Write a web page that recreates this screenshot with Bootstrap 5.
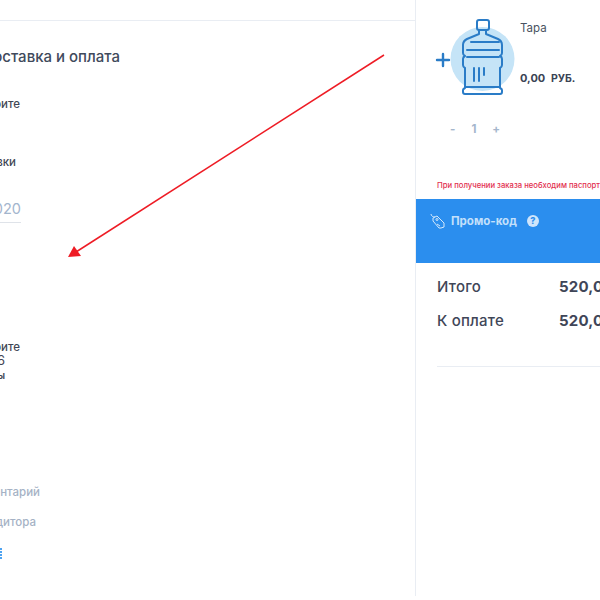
<!DOCTYPE html>
<html lang="ru">
<head>
<meta charset="utf-8">
<link href="https://cdn.jsdelivr.net/npm/bootstrap@5.3.0/dist/css/bootstrap.min.css" rel="stylesheet">
<style>
html,body{height:100%;overflow:hidden;background:#fff}
body{font-family:Inter,"Noto Sans",sans-serif;color:#3a4354}
.shell{height:596px;position:relative}
.pane-left{width:416px;border-right:1px solid #e9edf3;overflow:hidden;flex:none}
.pane-left-inner{margin-left:-100px;width:220px;padding-top:20px}
.top-rule{width:516px;border-top:1px solid #e9edf3;height:1px}
.line{text-align:right;white-space:nowrap}
.ttl{font-size:15px;font-weight:500;color:#3f4a5c;line-height:20px;margin-top:26px;width:220px}
.lbl{font-size:11.5px;font-weight:500;line-height:14px;color:#3f4655}
.l1{margin-top:30px;width:120px}
.l2{margin-top:44px;width:116px}
.date{font-size:14.500px;color:#a3b5cd;line-height:18px;margin-top:31px;width:121px}
.date-rule{border-bottom:1px solid #dfe3e9;margin-top:4px;width:121px}
.l3{margin-top:117px;width:120px}
.l3b{font-size:13px;line-height:13px;color:#3f4655;font-weight:400;width:105px}
.l3c{font-size:10px;line-height:14px;font-weight:600;color:#3f4655;width:105px;margin-top:1px}
.faded{font-size:11.5px;font-weight:500;color:#a5b2c5;line-height:14px}
.f1{margin-top:103px;width:140px}
.f2{margin-top:16px;width:136px}
.dots{width:102px;height:12px;margin-top:19px;display:flex;justify-content:flex-end}
.pane-right{flex:1;min-width:0;overflow:hidden}
.item{height:199px;padding:28px 0 0 21px;position:relative;white-space:nowrap}
.bottle{position:absolute;left:15px;top:17px}
.item-name{margin-left:83px;font-size:11.5px;line-height:1;margin-top:-5px;color:#4a5362}
.item-price{margin-left:83px;margin-top:36px;font-size:11px;font-weight:700;line-height:14px;color:#3a4354}
.item-price span{margin-left:3px;font-size:10.5px}
.stepper{margin-top:36px;margin-left:13px;font-size:11.5px;font-weight:700;color:#a5b6cc;line-height:14px;gap:16px}
.warn{color:#e2304f;font-size:7.700px;font-weight:500;line-height:10px;margin-top:45px}
.promo{height:64px;background:#2b8eee;color:#c3e0fb;padding:14px 0 0 14px;white-space:nowrap}
.promo-t{font-size:11.5px;font-weight:700;line-height:16px}
.tagi{flex:none;margin-right:6px}
.q{width:12px;height:12px;border-radius:50%;background:#cfe5fb;color:#2b8eee;font-size:9px;font-weight:800;line-height:12px;text-align:center;margin:2px 0 0 10px}
.sum{padding:14px 0 0 21px;white-space:nowrap}
.sum-row{font-size:15px;font-weight:500;line-height:20px;margin-bottom:14px;color:#3f4658;letter-spacing:.2px}
.sum-name{width:122px;flex:none}
.sum-val{font-weight:700;flex:none}
.sum-rule{border-top:1px solid #e9edf3;margin:35px 0 0 21px}
.arrow{position:absolute;left:0;top:0;pointer-events:none}
</style>
</head>
<body>
<div class="shell d-flex">
  <div class="pane-left">
    <div class="pane-left-inner">
      <div class="top-rule"></div>
      <div class="line ttl">Доставка и оплата</div>
      <div class="line lbl l1">Выберите</div>
      <div class="line lbl l2">Время доставки</div>
      <div class="line date">01.01.2020</div>
      <div class="date-rule"></div>
      <div class="line lbl l3">Выберите</div>
      <div class="line l3b">ул. Ленина, 6</div>
      <div class="line l3c">Оплаты</div>
      <div class="line faded f1">Комментарий</div>
      <div class="line faded f2">Для кредитора</div>
      <div class="dots">
        <svg width="2" height="12" viewBox="0 0 2 12"><path d="M0 1h2M0 4h2M0 7h2M0 10h2" stroke="#4ea3f1" stroke-width="2"/></svg>
      </div>
    </div>
  </div>
  <div class="pane-right">
    <div class="item">
      <svg class="bottle" width="88" height="80" viewBox="0 0 88 80" fill="none">
        <circle cx="51.500" cy="42" r="32" fill="#c5e4f7"/>
        <g stroke="#2a7cc7" stroke-width="2" stroke-linecap="round" stroke-linejoin="round">
          <path d="M6 43h12M12 37v12" stroke-width="2.400"/>
          <path d="M46 5q0-2 2-2h8q2 0 2 2v6q0 2-2 2H48q-2 0-2-2z"/>
          <path d="M48 13v4L36 22q-4 2-4 6v8q0 2 2 3-2 1-2 3v6q0 2 2 3v20q-2 1-2 2v2q0 2 2 2h35q2 0 2-2v-2q0-1-2-2V51q2-1 2-3v-6q0-2-2-3q2-1 2-3v-8q0-4-4-6l-12-5v-4"/>
          <path d="M40 25h28M36 33h32M36 40h32M35 70h33M43 51v13M48 51v13M53 51v7"/>
        </g>
      </svg>
      <div class="item-name">Тара</div>
      <div class="item-price">0,00 <span>РУБ.</span></div>
      <div class="stepper d-flex"><span>-</span><span>1</span><span>+</span></div>
      <div class="warn">При получении заказа необходим паспорт</div>
    </div>
    <div class="promo d-flex align-items-start">
      <svg class="tagi" width="15" height="16" viewBox="0 0 15 16" fill="none" stroke="#d5e9fb" stroke-width="1" stroke-linejoin="round"><path d="M1 1c0 2 2 3 4 3"/><path d="M3 5l4-2 7 7v4l-3 1-2 0-6-7z"/><circle cx="7" cy="6.500" r="1"/><path d="M7 11l3 2"/></svg>
      <span class="promo-t">Промо-код</span>
      <span class="q">?</span>
    </div>
    <div class="sum">
      <div class="sum-row d-flex"><span class="sum-name">Итого</span><span class="sum-val">520,00</span></div>
      <div class="sum-row d-flex"><span class="sum-name">К оплате</span><span class="sum-val">520,00</span></div>
    </div>
    <div class="sum-rule"></div>
  </div>
  <svg class="arrow" width="600" height="600" viewBox="0 0 600 600" fill="none">
    <path d="M384 55L76 252" stroke="#ee1c25" stroke-width="1.500"/>
    <path d="M68 257l6-11 7 10z" fill="#ee1c25"/>
  </svg>
</div>
</body>
</html>
